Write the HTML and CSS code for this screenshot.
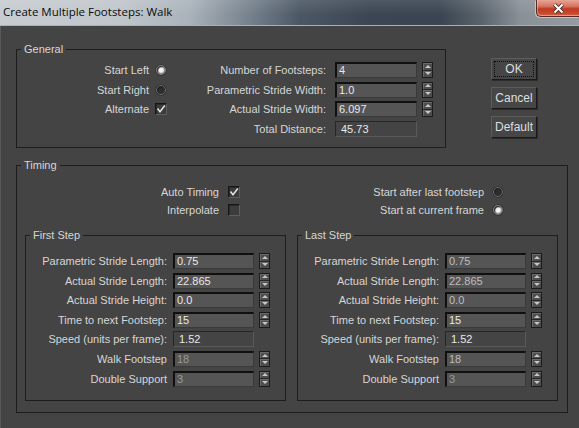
FILE: index.html
```html
<!DOCTYPE html>
<html>
<head>
<meta charset="utf-8">
<title>Create Multiple Footsteps: Walk</title>
<link rel="stylesheet" href="styles.css">
</head>
<body>
<div class="window">
  <div class="titlebar">
    <span class="title">Create Multiple Footsteps: Walk</span>
    <div class="close">
      <svg width="13" height="11" viewBox="0 0 13 11"><path d="M2.5 1.5L10.5 9.5M10.5 1.5L2.5 9.5" stroke="#3b2522" stroke-width="3.8"/><path d="M2.5 1.5L10.5 9.5M10.5 1.5L2.5 9.5" stroke="#ffffff" stroke-width="2"/></svg>
    </div>
  </div>
  <div class="client">
    <div class="top">
      <fieldset class="group general">
        <legend>General</legend>
        <div class="ggrid">
          <span class="lbl l1">Start Left</span>
          <span class="ctl"><span class="radio on"></span></span>
          <span class="lbl l3">Number of Footsteps:</span>
          <span class="fld">4</span>
          <span class="spin"><i></i><i></i></span>

          <span class="lbl l1">Start Right</span>
          <span class="ctl"><span class="radio"></span></span>
          <span class="lbl l3">Parametric Stride Width:</span>
          <span class="fld">1.0</span>
          <span class="spin"><i></i><i></i></span>

          <span class="lbl l1">Alternate</span>
          <span class="ctl"><span class="check on"><svg width="10" height="10" viewBox="0 0 10 10"><path d="M1.5 4.5L4 7.8L8.8 1.5" fill="none" stroke="#e4e4e4" stroke-width="1.5"/></svg></span></span>
          <span class="lbl l3">Actual Stride Width:</span>
          <span class="fld">6.097</span>
          <span class="spin"><i></i><i></i></span>

          <span></span>
          <span></span>
          <span class="lbl l3">Total Distance:</span>
          <span class="fld ro">45.73</span>
          <span></span>
        </div>
      </fieldset>
      <div class="buttons">
        <button class="btn focus"><span>OK</span></button>
        <button class="btn"><span>Cancel</span></button>
        <button class="btn"><span>Default</span></button>
      </div>
    </div>

    <fieldset class="group timing">
      <legend>Timing</legend>
      <div class="tinner">
        <div class="tgrid">
          <span class="lbl t1">Auto Timing</span>
          <span class="ctl tc"><span class="check on"><svg width="10" height="10" viewBox="0 0 10 10"><path d="M1.5 4.5L4 7.8L8.8 1.5" fill="none" stroke="#e4e4e4" stroke-width="1.5"/></svg></span></span>
          <span class="lbl t3">Start after last footstep</span>
          <span class="ctl tr"><span class="radio"></span></span>

          <span class="lbl t1">Interpolate</span>
          <span class="ctl tc"><span class="check"></span></span>
          <span class="lbl t3">Start at current frame</span>
          <span class="ctl tr"><span class="radio on"></span></span>
        </div>
        <div class="steps">
          <fieldset class="group step">
            <legend>First Step</legend>
            <div class="sgrid">
              <span class="lbl s1">Parametric Stride Length:</span>
              <span class="fld">0.75</span>
              <span class="spin"><i></i><i></i></span>

              <span class="lbl s1">Actual Stride Length:</span>
              <span class="fld">22.865</span>
              <span class="spin"><i></i><i></i></span>

              <span class="lbl s1">Actual Stride Height:</span>
              <span class="fld">0.0</span>
              <span class="spin"><i></i><i></i></span>

              <span class="lbl s1">Time to next Footstep:</span>
              <span class="fld">15</span>
              <span class="spin"><i></i><i></i></span>

              <span class="lbl s1">Speed (units per frame):</span>
              <span class="fld ro">1.52</span>
              <span></span>

              <span class="lbl s1">Walk Footstep</span>
              <span class="fld dim">18</span>
              <span class="spin"><i></i><i></i></span>

              <span class="lbl s1">Double Support</span>
              <span class="fld dim">3</span>
              <span class="spin"><i></i><i></i></span>
            </div>
          </fieldset>
          <fieldset class="group step">
            <legend>Last Step</legend>
            <div class="sgrid">
              <span class="lbl s1">Parametric Stride Length:</span>
              <span class="fld dim2">0.75</span>
              <span class="spin"><i></i><i></i></span>

              <span class="lbl s1">Actual Stride Length:</span>
              <span class="fld dim2">22.865</span>
              <span class="spin"><i></i><i></i></span>

              <span class="lbl s1">Actual Stride Height:</span>
              <span class="fld dim2">0.0</span>
              <span class="spin"><i></i><i></i></span>

              <span class="lbl s1">Time to next Footstep:</span>
              <span class="fld">15</span>
              <span class="spin"><i></i><i></i></span>

              <span class="lbl s1">Speed (units per frame):</span>
              <span class="fld ro">1.52</span>
              <span></span>

              <span class="lbl s1">Walk Footstep</span>
              <span class="fld dim2">18</span>
              <span class="spin"><i></i><i></i></span>

              <span class="lbl s1">Double Support</span>
              <span class="fld dim">3</span>
              <span class="spin"><i></i><i></i></span>
            </div>
          </fieldset>
        </div>
      </div>
    </fieldset>
  </div>
</div>
</body>
</html>
```

FILE: styles.css
```css
* { box-sizing: border-box; }
html, body { margin: 0; padding: 0; }
body {
  background: #444444;
  font-family: "Liberation Sans", Arial, sans-serif;
  font-size: 11px;
  color: #d6d6d6;
}
.window {
  width: 579px;
  height: 428px;
  overflow: hidden;
  background: #444444;
}

/* title bar */
.titlebar {
  height: 26px;
  display: flex;
  align-items: flex-start;
  border-bottom: 1px solid #a9b0b6;
  background:
    linear-gradient(180deg, rgba(255,255,255,0.10) 0, rgba(255,255,255,0) 60%),
    linear-gradient(90deg, #c7ccd1 0, #c0c6cc 120px, #a9b2ba 190px, #75818c 250px, #4b5763 300px, #3b4652 370px, #3a4551 440px, #58626b 480px, #899097 520px, #959ba1 579px);
}
.title {
  font-family: "Open Sans", "Noto Sans", sans-serif;
  font-size: 11.5px;
  line-height: 16px;
  color: #0b0b0b;
  padding: 4px 0 0 3px;
  white-space: nowrap;
}
.close {
  margin-left: auto;
  width: 43px;
  height: 17px;
  display: flex;
  align-items: center;
  justify-content: center;
  border-left: 1px solid #5a2a22;
  border-bottom: 1px solid #5a2a22;
  border-bottom-left-radius: 5px;
  box-shadow: -1px 1px 0 rgba(255,255,255,0.45), inset 1px -1px 0 rgba(255,255,255,0.35);
  background: linear-gradient(180deg, #e7a596 0, #d6735f 40%, #c23a22 55%, #c64a2e 85%, #d86b4a 100%);
}
.close svg { display: block; }

/* client */
.client {
  height: 402px;
  padding: 16px 0 0 16px;
  box-shadow: inset 1px 0 0 #595959;
}
.top {
  display: flex;
  align-items: flex-start;
}
.group {
  margin: 0;
  padding: 0;
  min-width: 0;
  border: 1px solid #1d1d1d;
}
.group legend {
  margin-left: 4px;
  padding: 0 3px;
  font-size: 11px;
  line-height: 14px;
  color: #d6d6d6;
}
.general { width: 430px; }

.ggrid {
  display: grid;
  grid-template-columns: 136px 17px 165px 82px 16px;
  grid-auto-rows: 19.5px;
  padding: 6px 0 7px;
}
.lbl {
  text-align: right;
  line-height: 16px;
  white-space: nowrap;
}
.l1 { padding-right: 4px; }
.l3 { padding-right: 9px; }
.ctl {
  display: flex;
  align-items: center;
  height: 16px;
}
.ggrid .ctl .radio { margin-left: 3px; }
.ggrid .ctl .check { margin-left: 2px; }

/* controls */
.radio {
  width: 10px;
  height: 10px;
  border-radius: 50%;
  border: 1px solid #6c6c6c;
  background: #2e2e2e;
  box-shadow: 0 0 0 0.5px #252525, inset 1px 1px 1px #1e1e1e;
}
.radio.on {
  border-color: #808080;
  background: radial-gradient(circle, #f6f6f6 0, #f0f0f0 2.2px, #a8a8a8 3.2px, #5e5e5e 4.5px);
}
.check {
  width: 12px;
  height: 12px;
  display: flex;
  align-items: center;
  justify-content: center;
  background: #3c3c3c;
  border: 1px solid #5e5e5e;
  border-top-color: #161616;
  border-left-color: #161616;
  box-shadow: inset 1px 1px 0 #2a2a2a;
}
.check svg { display: block; }

.fld {
  height: 16px;
  background: #555555;
  border: 1px solid #3a3a3a;
  border-top: 2px solid #101010;
  border-left: 2px solid #101010;
  padding-left: 2px;
  line-height: 13px;
  color: #e8e8e8;
  white-space: nowrap;
  overflow: hidden;
}
.fld.ro {
  background: #444444;
  border: 1px solid #5a5a5a;
  border-top-color: #262626;
  border-left-color: #262626;
  padding-left: 5px;
  line-height: 14px;
}
.fld.dim { color: #9a9a9a; }
.fld.dim2 { color: #bdbdbd; }

.spin {
  margin-left: 5px;
  width: 11px;
  height: 16px;
  display: flex;
  flex-direction: column;
  border: 1px solid #1b1b1b;
  background: #4d4d4d;
}
.spin i {
  flex: 1;
  display: flex;
  align-items: center;
  justify-content: center;
  box-shadow: inset 1px 1px 0 #6a6a6a;
}
.spin i:first-child { border-bottom: 1px solid #262626; }
.spin i::before {
  content: "";
  border-left: 3px solid transparent;
  border-right: 3px solid transparent;
  border-bottom: 3px solid #c8c8c8;
}
.spin i:last-child::before {
  border-bottom: 0;
  border-top: 3px solid #c8c8c8;
}

/* buttons */
.buttons {
  display: flex;
  flex-direction: column;
  gap: 7px;
  margin: 16px 0 0 45px;
}
.btn {
  width: 46px;
  height: 22px;
  padding: 2px;
  margin: 0;
  background: #464646;
  border: 1px solid #1a1a1a;
  border-top-color: #5c5c5c;
  border-left-color: #5c5c5c;
  box-shadow: 1px 1px 0 #2c2c2c;
  font-family: "Liberation Sans", Arial, sans-serif;
  font-size: 12px;
  color: #dcdfe2;
  display: flex;
}
.btn span {
  flex: 1;
  display: flex;
  align-items: center;
  justify-content: center;
  border: 1px dotted transparent;
}
.btn.focus span { border-color: #0c0c0c; }

/* timing */
.timing {
  width: 552px;
  margin-top: 10px;
}
.tinner {
  padding: 11px 9px 11px 8px;
}
.tgrid {
  display: grid;
  grid-template-columns: 199px 16px 249px 16px;
  grid-auto-rows: 18px;
  align-items: center;
}
.t1 { padding-right: 5px; }
.t3 { padding-right: 5px; }
.tc .check { margin-left: 4px; }
.tr .radio { margin-left: 4px; }

.steps {
  display: flex;
  gap: 11px;
  margin-top: 9px;
}
.step { width: 261px; }
.sgrid {
  display: grid;
  grid-template-columns: 147px 81px 16px;
  grid-auto-rows: 19.6px;
  align-items: start;
  padding: 11px 0 10px;
}
.s1 { padding-right: 6px; }
```
